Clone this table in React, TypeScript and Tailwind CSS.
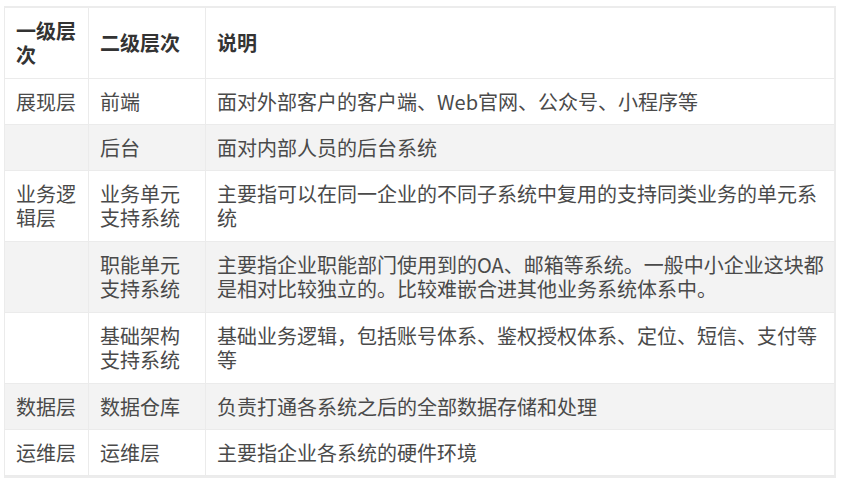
const rows: [string, string, string[], boolean][] = [
  ["展现层", "前端", ["面对外部客户的客户端、Web官网、公众号、小程序等"], false],
  ["", "后台", ["面对内部人员的后台系统"], true],
  [
    "业务逻\n辑层",
    "业务单元\n支持系统",
    ["主要指可以在同一企业的不同子系统中复用的支持同类业务的单元系", "统"],
    false,
  ],
  [
    "",
    "职能单元\n支持系统",
    ["主要指企业职能部门使用到的OA、邮箱等系统。一般中小企业这块都", "是相对比较独立的。比较难嵌合进其他业务系统体系中。"],
    true,
  ],
  [
    "",
    "基础架构\n支持系统",
    ["基础业务逻辑，包括账号体系、鉴权授权体系、定位、短信、支付等", "等"],
    false,
  ],
  ["数据层", "数据仓库", ["负责打通各系统之后的全部数据存储和处理"], true],
  ["运维层", "运维层", ["主要指企业各系统的硬件环境"], false],
];

function Lines({ text }: { text: string }) {
  const parts = text.split("\n");
  return (
    <>
      {parts.map((p, i) => (
        <span key={i} className="block">
          {p}
        </span>
      ))}
    </>
  );
}

export default function App() {
  return (
    <div
      className="w-[845px] h-[486px] bg-white pt-[6px] pl-[4px]"
      style={{ fontFamily: '"Microsoft YaHei", "Noto Sans CJK SC", "Liberation Sans", sans-serif' }}
    >
      <div className="w-[832px] border-t-2 border-r-2 border-b-2 border-[#ececec]">
        <table className="w-full table-fixed border-collapse text-[20px] leading-[24px] text-[#4a4a4a]">
          <colgroup>
            <col className="w-[84px]" />
            <col className="w-[117px]" />
            <col />
          </colgroup>
          <thead>
            <tr>
              <th className="border border-t-0 border-[#ebebeb] px-[11px] py-[11px] text-left font-bold text-[#333]">
                一级层次
              </th>
              <th className="border border-t-0 border-[#ebebeb] px-[11px] py-[11px] text-left font-bold text-[#333]">
                二级层次
              </th>
              <th className="border border-t-0 border-r-0 border-[#ebebeb] px-[11px] py-[11px] text-left font-bold text-[#333]">
                说明
              </th>
            </tr>
          </thead>
          <tbody>
            {rows.map(([a, b, c, striped], i) => {
              const pad = c.length > 1 ? "py-[11px]" : "pt-[11px] pb-[10px]";
              return (
                <tr key={i} className={striped ? "bg-[#f3f3f3]" : "bg-white"}>
                  <td className={`border border-[#ebebeb] px-[11px] ${pad} align-middle whitespace-nowrap`}>
                    <Lines text={a} />
                  </td>
                  <td className={`border border-[#ebebeb] px-[11px] ${pad} align-middle whitespace-nowrap`}>
                    <Lines text={b} />
                  </td>
                  <td className={`border border-r-0 border-[#ebebeb] px-[11px] ${pad} align-middle whitespace-nowrap`}>
                    {c.map((l, j) => (
                      <span key={j} className="block">
                        {l}
                      </span>
                    ))}
                  </td>
                </tr>
              );
            })}
          </tbody>
        </table>
      </div>
    </div>
  );
}
